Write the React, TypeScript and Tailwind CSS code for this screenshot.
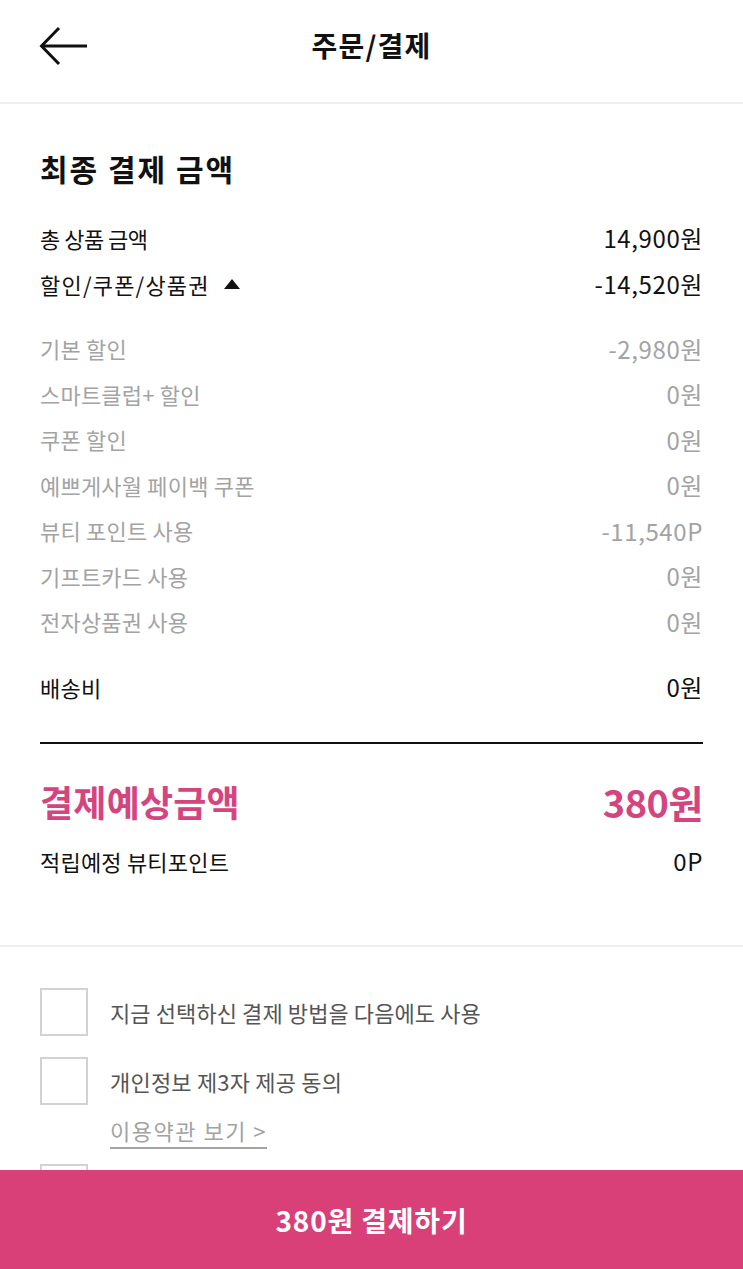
import React from "react";

const font = { fontFamily: '"Noto Sans CJK KR", "Noto Sans", sans-serif' };

function Row({ label, value, gray }: { label: string; value: string; gray?: boolean }) {
  return (
    <div className={`flex items-center justify-between h-[45.5px] ${gray ? "text-[#a3a3a3]" : "text-[#111]"}`}>
      <span className="text-[22px] tracking-[0.2px]">{label}</span>
      <span className="text-[24px] tracking-[0.6px]">{value}</span>
    </div>
  );
}

export default function App() {
  return (
    <div style={font} className="relative w-[743px] min-h-[1269px] bg-white overflow-hidden">
      {/* Header */}
      <div className="relative flex items-center justify-center h-[104px] border-b-2 border-[#efefef]">
        <svg className="absolute left-[38px] top-[26px]" width="52" height="42" viewBox="0 0 52 42" fill="none">
          <path d="M4 20h45" stroke="#111" strokeWidth="3" strokeLinecap="butt" />
          <path d="M21 2L3.5 20L21 38" stroke="#111" strokeWidth="3" strokeLinejoin="miter" />
        </svg>
        <span className="text-[28px] font-bold text-[#111] tracking-[1.2px] mt-[-12px]">주문/결제</span>
      </div>

      <div className="px-[40px]">
        <div className="mt-[41px] h-[46px] flex items-center text-[30px] font-bold text-[#111] tracking-[2px]">최종 결제 금액</div>
        <div className="mt-[24px]">
          <div className="flex items-center justify-between h-[46px] text-[#111]">
            <span className="text-[22px] tracking-[-0.5px]">총 상품 금액</span>
            <span className="text-[24px] tracking-[0.6px]">14,900원</span>
          </div>
          <div className="flex items-center justify-between h-[46px] text-[#111]">
            <div className="flex items-center">
              <span className="text-[22px] tracking-[1.2px]">할인/쿠폰/상품권</span>
              <svg className="ml-[14px]" width="16" height="10" viewBox="0 0 16 10">
                <path d="M8 0L16 10H0Z" fill="#111" />
              </svg>
            </div>
            <span className="text-[24px] tracking-[0.6px]">-14,520원</span>
          </div>
        </div>

        <div className="mt-[19px]">
          <Row gray label="기본 할인" value="-2,980원" />
          <Row gray label="스마트클럽+ 할인" value="0원" />
          <Row gray label="쿠폰 할인" value="0원" />
          <Row gray label="예쁘게사월 페이백 쿠폰" value="0원" />
          <Row gray label="뷰티 포인트 사용" value="-11,540P" />
          <Row gray label="기프트카드 사용" value="0원" />
          <Row gray label="전자상품권 사용" value="0원" />
        </div>

        <div className="mt-[19.5px] flex items-center justify-between h-[46px] text-[#111]">
          <span className="text-[22px] tracking-[0.2px]">배송비</span>
          <span className="text-[24px] tracking-[0.6px]">0원</span>
        </div>

        <div className="mt-[32px] h-[2px] bg-[#111]" />

        <div className="mt-[29px] flex items-center justify-between h-[56px] font-bold text-[#d4457f]">
          <span className="text-[36px] tracking-[0.2px]">결제예상금액</span>
          <span className="text-[38px] tracking-[-0.5px]">380원</span>
        </div>

        <div className="mt-[9px] flex items-center justify-between h-[46px] text-[#111]">
          <span className="text-[22px] tracking-[0.2px]">적립예정 뷰티포인트</span>
          <span className="text-[24px] tracking-[0.6px]">0P</span>
        </div>
      </div>

      <div className="mt-[61px] h-[2px] bg-[#efefef]" />

      <div className="px-[40px] pb-[120px]">
        <div className="mt-[41px] flex items-center">
          <div className="w-[48px] h-[48px] border-2 border-[#d2d2d2] shrink-0" />
          <span className="ml-[22px] text-[22px] tracking-[0.1px] text-[#555]">지금 선택하신 결제 방법을 다음에도 사용</span>
        </div>
        <div className="mt-[21px] flex items-center">
          <div className="w-[48px] h-[48px] border-2 border-[#d2d2d2] shrink-0" />
          <span className="ml-[22px] text-[22px] tracking-[0.2px] text-[#555]">개인정보 제3자 제공 동의</span>
        </div>
        <div className="ml-[70px] mt-[9px] flex items-center">
          <span className="text-[22px] tracking-[1.5px] text-[#a3a3a3] underline underline-offset-[7px] decoration-[2px]">이용약관 보기 &gt;</span>
        </div>
        <div className="mt-[17px] flex items-center">
          <div className="w-[48px] h-[48px] border-2 border-[#d2d2d2] shrink-0" />
        </div>
      </div>

      {/* Bottom bar */}
      <div className="fixed left-0 bottom-0 w-[743px] h-[99px] bg-[#d94077] flex items-center justify-center">
        <span className="text-[28px] font-bold text-white tracking-[0.8px]">380원 결제하기</span>
      </div>
    </div>
  );
}
